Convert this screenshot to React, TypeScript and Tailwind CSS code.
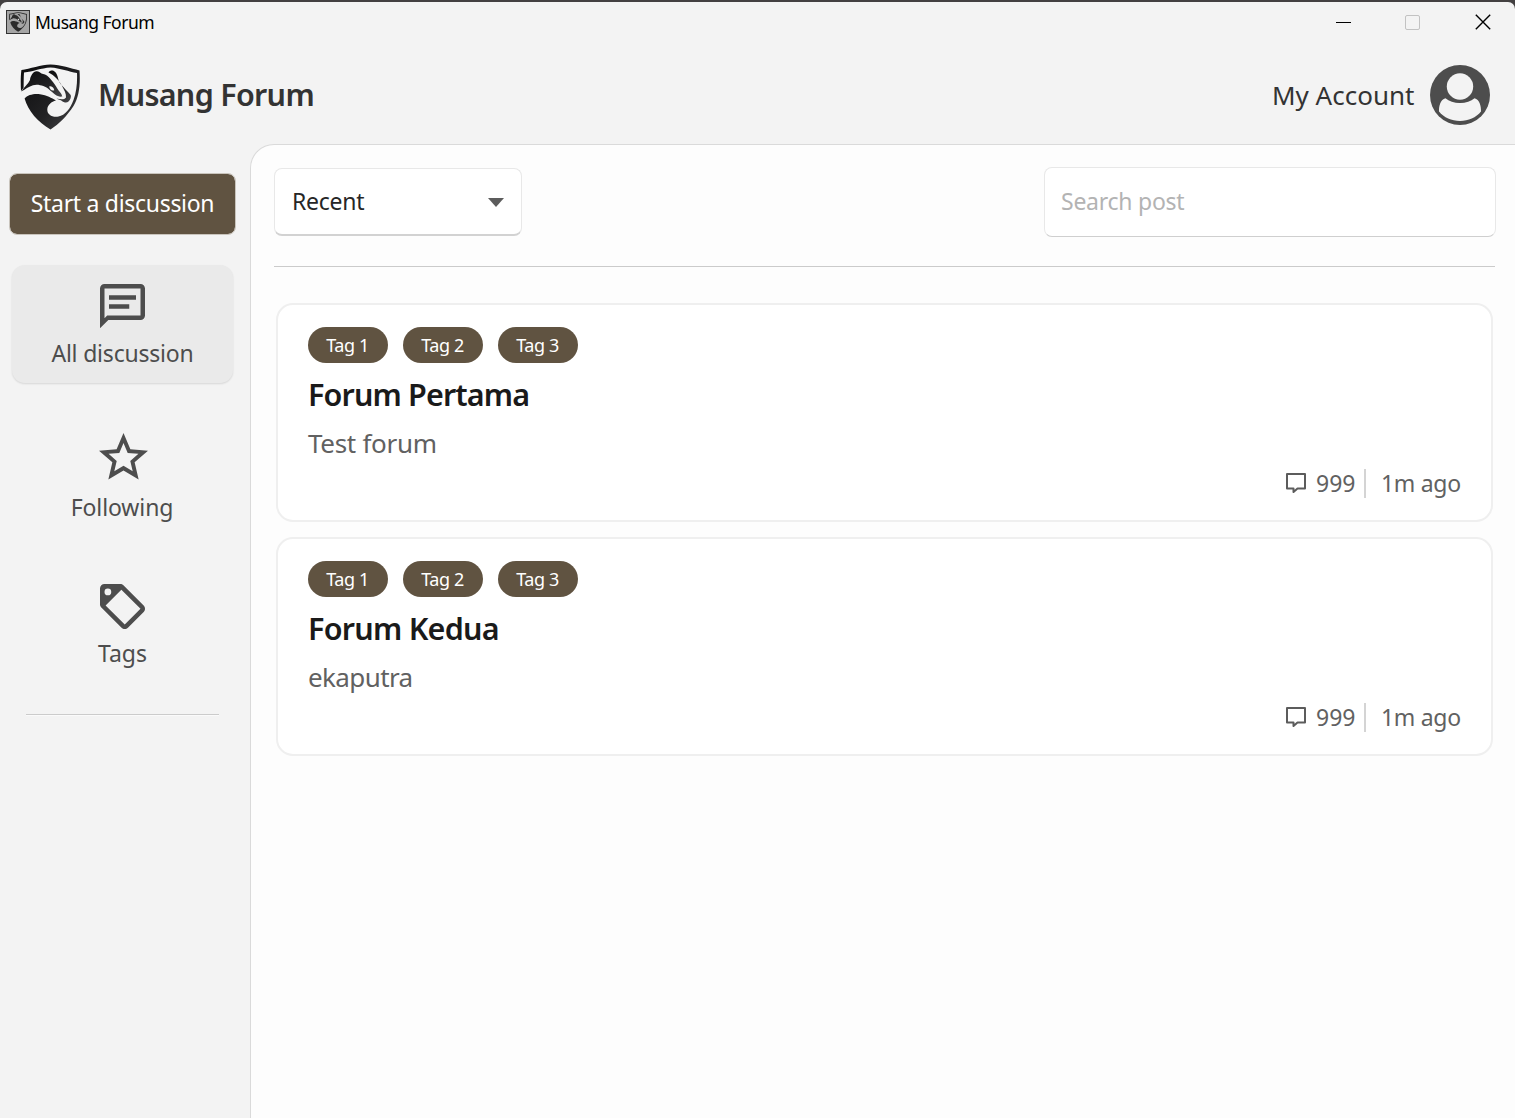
import React from "react";

function Badger({ className, ink = "url(#ink)" }: { className: string; ink?: string }) {
  return (
    <svg viewBox="0 0 60 66" className={className} aria-hidden="true">
      <defs>
        <linearGradient id="ink" x1="0" y1="0" x2="1" y2="1">
          <stop offset="0" stopColor="#0c0c0d" />
          <stop offset="0.6" stopColor="#222224" />
          <stop offset="1" stopColor="#48484a" />
        </linearGradient>
      </defs>
      <path
        fill={ink}
        d="M1 27C0.6 20 0.6 12 1.4 6C10 5 21 1 30.500 0.600C41 1 51 4.500 59.500 6.500C60.500 21 59 33 53.500 42C47 52 39 60 30.500 65.500C18 58 8 47 4.600 34.500C7.500 31 14 29.500 20 30.300C27 31.200 31.500 34 36 36.500C31.500 37.500 27.500 41 27.300 45.500C27.200 50.500 32 53.500 38.500 52.500C45 51.500 50.500 44.500 53.500 36C56.500 28 57.400 19 57 9C49 7.500 40 4 30.500 3.400C21 4 13 7.400 4 8.400C3.600 14 3.800 18.500 3.600 23.800Z"
      />
      <path
        fill={ink}
        d="M1 27.500C4 23.500 8.500 19.500 10 16C10.300 12.500 13 7.300 16.700 7.300C18.800 7.300 20 8.800 21.500 9.500C22.500 10 23.800 10 25 10.600C27.500 11.800 30 14.300 31.700 16.500C34 19 35.800 21.700 37.300 24.500C38.800 27.300 41.500 28.800 42.300 32.500C39.800 33 37.500 32.300 35 30.500C31 27.500 28 23.500 23.300 22C20 21 17 20 13 21.200C9 22.300 5 25.500 1 27.500Z"
      />
      <path
        fill={ink}
        d="M28.500 8.500C29.500 6.800 32 6.200 33.800 6.900C36 8 36.800 10 37.600 12.500C38.500 16 39 18 41 20.500C44 23.800 47.500 27.500 50.700 31C51.400 33 50.500 35.500 48.500 37.500C47 39 44 38.800 42 37C40.500 36 38.500 35.500 36.500 34.500C40 35.500 44.500 36 46 33.500C46.200 29 44.300 26.500 42.300 22.500C39.500 16.500 34.500 11.500 28.500 8.500Z"
      />
      <path
        d="M29.300 22.300C31 21.700 33.800 23 34.300 26.300C31.800 27.300 29.300 25.300 29.300 22.300Z"
        fill="#f3f3f3"
      />
    </svg>
  );
}

function Icon({ d, className }: { d: string; className: string }) {
  return (
    <svg viewBox="2 2 20 20" fill="currentColor" className={className} aria-hidden="true">
      <path fillRule="evenodd" d={d} />
    </svg>
  );
}

const messagePath =
  "M20 2H4c-1.100 0-2 .9-2 2v17.700l3.700-3.700H20c1.100 0 2-.9 2-2V4c0-1.100-.9-2-2-2m0 14H5.200L4 17.200V4h16zM6 7h12v2H6zM6 11h9v2H6z";
const starPath =
  "M12 15.390L8.240 17.660L9.230 13.380L5.910 10.500L10.290 10.130L12 6.090L13.710 10.130L18.090 10.500L14.770 13.380L15.760 17.660M22 9.240L14.810 8.630L12 2L9.190 8.630L2 9.240L7.450 13.970L5.820 21L12 17.270L18.180 21L16.540 13.970L22 9.240Z";
const tagPath =
  "M5.500 7A1.500 1.500 0 0 0 7 5.500A1.500 1.500 0 0 0 5.500 4A1.500 1.500 0 0 0 4 5.500A1.500 1.500 0 0 0 5.500 7M21.410 11.580C21.770 11.940 22 12.440 22 13C22 13.550 21.780 14.050 21.410 14.410L14.410 21.410C14.050 21.770 13.550 22 13 22C12.450 22 11.950 21.770 11.580 21.410L2.590 12.410C2.220 12.050 2 11.550 2 11V4C2 2.890 2.890 2 4 2H11C11.550 2 12.050 2.220 12.410 2.580L21.410 11.580M13 20L20 13L11.500 4.500L4.500 11.500L13 20Z";

function Avatar() {
  return (
    <svg viewBox="0 0 60 60" className="size-[60px]" aria-hidden="true">
      <circle cx="30" cy="30" r="30" fill="#4d4d4d" />
      <path
        d="M15.500 33.200C19 36 24 38 30 38C36 38 41 36 44.500 33.200C49.500 34.500 51.200 41 51 46.500C46 52.500 38.500 56 30 56C21.500 56 14 52.500 9 46.500C8.800 41 10.500 34.500 15.500 33.200Z"
        fill="#f3f3f3"
      />
      <circle cx="30" cy="21.500" r="16" fill="#4d4d4d" />
      <circle cx="30" cy="21.500" r="13.200" fill="#f3f3f3" />
    </svg>
  );
}

const posts = [
  { title: "Forum Pertama", body: "Test forum", titleClass: "tracking-[-0.85px]", bodyClass: "tracking-[-0.3px]" },
  { title: "Forum Kedua", body: "ekaputra", titleClass: "tracking-[-0.75px]", bodyClass: "tracking-[-0.6px]" },
];

function Post({ title, body, titleClass, bodyClass }: (typeof posts)[number]) {
  return (
    <article className="flex h-[219px] flex-col rounded-[17px] border-2 border-[#efefef] bg-white px-[30px] pt-[22px]">
      <div className="flex gap-[15px]">
        {["Tag 1", "Tag 2", "Tag 3"].map((t) => (
          <span
            key={t}
            className="flex h-9 w-20 items-center justify-center rounded-[18px] bg-[#605341] pr-px text-[18px] leading-none whitespace-nowrap text-white tracking-[-0.4px]"
          >
            {t}
          </span>
        ))}
      </div>
      <h2 className={`mt-[9px] h-11 text-[30.500px] leading-[44px] font-semibold whitespace-nowrap text-[#1a1a1a] ${titleClass}`}>
        {title}
      </h2>
      <p className={`mt-[9px] h-9 text-[26px] leading-9 whitespace-nowrap text-[#616161] ${bodyClass}`}>{body}</p>
      <div className="mt-[7px] flex h-[30px] items-center justify-end text-[23px] leading-[30px] text-[#616161]">
        <svg viewBox="0 0 22 22" className="size-[22px]" fill="none" stroke="#5c5c5c" strokeWidth="2" aria-hidden="true">
          <path d="M2 2H20V16.500H12.500L8.500 20V16.500H2Z" strokeLinejoin="round" />
        </svg>
        <span className="ml-[9px] w-[40px] whitespace-nowrap">999</span>
        <span className="ml-[8px] h-[29px] w-[2px] bg-[#d4d4d4]" />
        <span className="ml-[15px] w-[80px] whitespace-nowrap tracking-[-0.3px]">1m ago</span>
      </div>
    </article>
  );
}

export default function App() {
  return (
    <div className="flex h-[1118px] w-[1515px] flex-col overflow-hidden bg-[#434041] font-['Noto_Sans','Segoe_UI',sans-serif]">
      <div className="mt-[2px] flex min-h-0 flex-1 flex-col rounded-t-[7px] bg-[#f3f3f3]">
        <div className="flex h-[40px] shrink-0 items-center pl-[6px]">
          <span className="flex size-6 items-center justify-center border border-[#333] bg-[#a5a5a5]">
            <Badger className="h-[20px] w-[20px]" ink="#2c2c2c" />
          </span>
          <span className="ml-[5px] text-[17.500px] leading-[24px] whitespace-nowrap text-black tracking-[-0.5px]">Musang Forum</span>
          <div className="ml-auto flex items-center pr-[24px]">
            <span className="h-px w-[15px] bg-black" />
            <span className="ml-[54px] size-[15px] rounded-[2px] border border-[#c2c2c2]" />
            <svg viewBox="0 0 16 16" className="ml-[55px] size-4" stroke="#000" strokeWidth="1.4" aria-hidden="true">
              <path d="M0.800 0.800L15.200 15.200M15.200 0.800L0.800 15.200" />
            </svg>
          </div>
        </div>
        <header className="flex h-[102px] shrink-0 items-center pt-[3px] pr-[25px] pl-[20px]">
          <Badger className="mt-[4px] h-[66px] w-[60px]" />
          <h1 className="-mt-[2px] ml-[18px] text-[30.500px] leading-[44px] font-semibold whitespace-nowrap text-[#333] tracking-[-0.7px]">
            Musang Forum
          </h1>
          <span className="mt-px ml-auto w-[143px] text-[26px] leading-9 whitespace-nowrap text-[#333]">My Account</span>
          <span className="ml-[15px]">
            <Avatar />
          </span>
        </header>
        <div className="flex min-h-0 flex-1">
          <nav className="flex w-[250px] shrink-0 flex-col text-[23px] leading-8 text-[#4d4d4d]">
            <button className="mt-[29px] ml-[9px] flex h-[62px] w-[227px] items-center justify-center rounded-[8px] border border-[#c9c4bc] bg-[#605341] bg-clip-padding pb-[2px] whitespace-nowrap text-white tracking-[-0.3px]">
              Start a discussion
            </button>
            <div className="mt-[30px] ml-[12px] flex h-[118px] w-[221px] flex-col items-center rounded-[13px] bg-[#eaeaea] pt-[19px] shadow-[0_1px_2px_rgba(0,0,0,0.12)]">
              <Icon d={messagePath} className="size-[45px]" />
              <span className="mt-[8px] whitespace-nowrap tracking-[-0.2px]">All discussion</span>
            </div>
            <div className="mt-[50px] ml-[12px] flex w-[222px] flex-col items-center">
              <Icon d={starPath} className="size-[49px]" />
              <span className="mt-[9px] mr-[2px] whitespace-nowrap tracking-[-0.1px]">Following</span>
            </div>
            <div className="mt-[61px] ml-[12px] flex w-[221px] flex-col items-center">
              <Icon d={tagPath} className="size-[45px]" />
              <span className="mt-[8px] whitespace-nowrap">Tags</span>
            </div>
            <hr className="mt-[45px] ml-[26px] w-[193px] border-t border-[#cbcbcb] shadow-[0_1px_0_#fafafa]" />
          </nav>
          <main className="flex flex-1 flex-col rounded-tl-[24px] border-t border-l border-[#dadada] bg-[#fdfdfd] pt-[22px] pl-[23px]">
            <div className="flex items-start justify-between pr-[19px]">
              <div className="mt-px flex h-[68px] w-[248px] items-center justify-between rounded-[8px] border border-b-2 border-[#e8e8e8] border-b-[#d2d2d2] bg-white pr-[17px] pl-[17px]">
                <span className="-mt-[2px] text-[23px] leading-8 whitespace-nowrap text-[#262626] tracking-[-0.25px]">Recent</span>
                <span className="mt-px h-0 w-0 border-x-8 border-t-[9px] border-x-transparent border-t-[#5c5c5c]" />
              </div>
              <div className="flex h-[70px] w-[452px] items-center rounded-[8px] border border-[#e8e8e8] border-b-[#cfcfcf] bg-white pb-[2px] pl-[16px]">
                <span className="text-[23px] leading-8 whitespace-nowrap text-[#b3b3b3] tracking-[-0.25px]">Search post</span>
              </div>
            </div>
            <hr className="mt-[29px] w-[1221px] border-t border-[#cbcbcb]" />
            <section className="mt-[36px] ml-[2px] flex w-[1217px] flex-col gap-[15px]">
              {posts.map((p) => (
                <Post key={p.title} {...p} />
              ))}
            </section>
          </main>
        </div>
      </div>
    </div>
  );
}
